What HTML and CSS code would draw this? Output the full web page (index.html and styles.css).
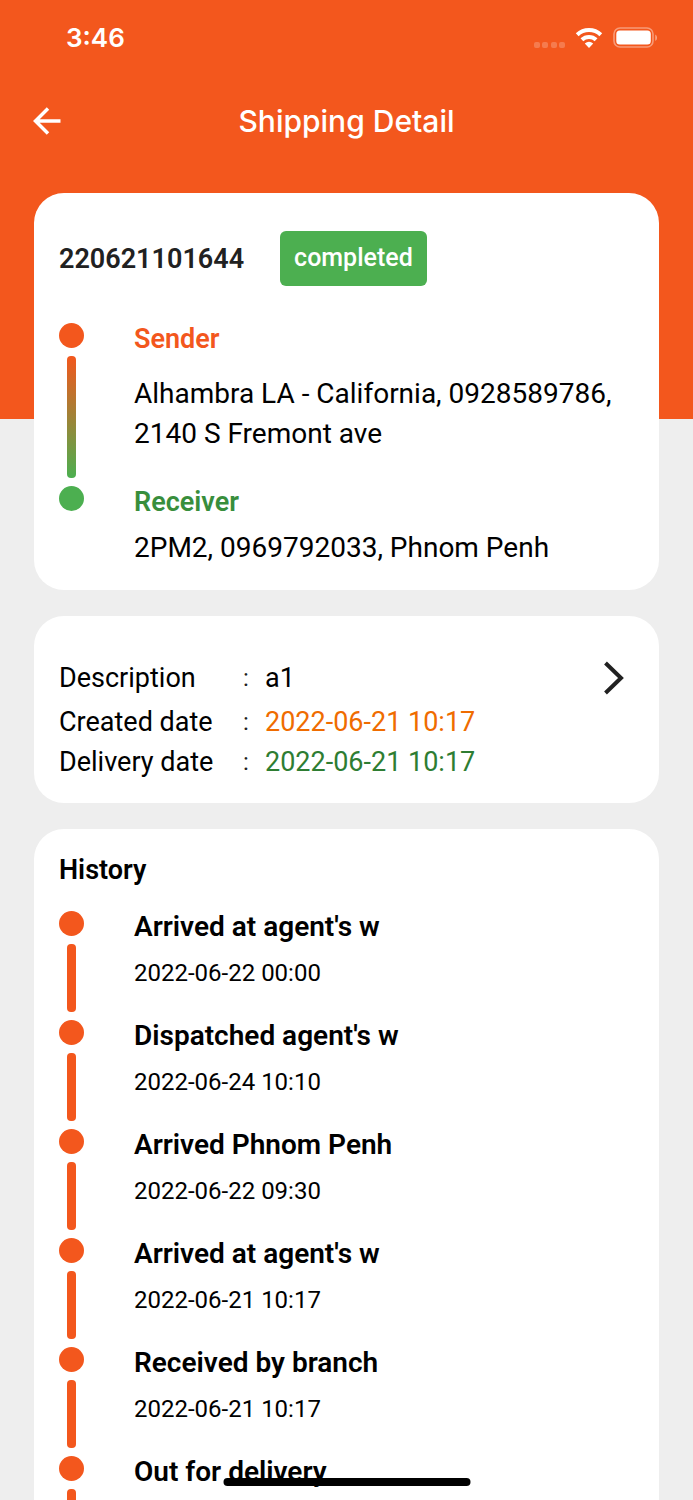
FILE: index.html
```html
<!DOCTYPE html>
<html lang="en">
<head>
<meta charset="utf-8">
<meta name="viewport" content="width=device-width, initial-scale=1">
<title>Shipping Detail</title>
<link rel="stylesheet" href="styles.css">
</head>
<body>
<div class="app">
  <div class="status-bar">
    <span class="clock">3:46</span>
    <div class="status-icons">
      <svg class="signal" width="32" height="8" viewBox="0 0 32 8" fill="#fff" fill-opacity=".22" aria-hidden="true"><rect x="1" y="1" width="6" height="6" rx="2"/><rect x="9" y="1" width="6" height="6" rx="2"/><rect x="18" y="1" width="6" height="6" rx="2"/><rect x="26" y="1" width="6" height="6" rx="2"/></svg>
      <svg width="28" height="20" viewBox="0 0 28 20" aria-hidden="true">
        <path d="M2.2 6.8A17 17 0 0 1 25.8 6.8" fill="none" stroke="#fff" stroke-width="4"/>
        <path d="M6.9 11.8A10.3 10.3 0 0 1 21.1 11.8" fill="none" stroke="#fff" stroke-width="4"/>
        <path d="M9.8 15.6Q14 12 18.2 15.6L14 20Z" fill="#fff"/>
      </svg>
      <svg width="45" height="22" viewBox="0 0 45 22" aria-hidden="true">
        <rect x="1" y="1" width="39" height="19" rx="6" fill="none" stroke="#fff" stroke-opacity=".4" stroke-width="1.6"/>
        <rect x="3.300" y="3.500" width="34.500" height="14" rx="3.500" fill="#fff"/>
        <path d="M42.300 7.500Q44 8.500 44 10.700T42.300 14Z" fill="#fff" fill-opacity=".5"/>
      </svg>
    </div>
  </div>

  <header class="toolbar">
    <button class="icon-button" type="button" aria-label="Back">
      <svg width="28" height="28" viewBox="0 0 28 28" fill="none" stroke="#fff" stroke-width="3.500" aria-hidden="true"><path d="M27.500 14H3M15 1.500L2.500 14L15 26.500"/></svg>
    </button>
    <h1 class="toolbar-title">Shipping Detail</h1>
  </header>

  <main class="cards">
    <section class="card route">
      <div class="route-head">
        <span class="tracking">220621101644</span>
        <span class="badge">completed</span>
      </div>
      <div class="step">
        <div class="rail"><span class="dot"></span><span class="bar bar-fade"></span></div>
        <div class="stop stop-from">
          <h2 class="stop-title sender">Sender</h2>
          <p class="address">Alhambra LA - California, 0928589786, 2140 S Fremont ave</p>
        </div>
      </div>
      <div class="step">
        <div class="rail"><span class="dot dot-green"></span></div>
        <div class="stop stop-to">
          <h2 class="stop-title receiver">Receiver</h2>
          <p class="address">2PM2, 0969792033, Phnom Penh</p>
        </div>
      </div>
    </section>

    <section class="card info">
      <dl class="facts">
        <div class="fact fact-main"><dt>Description</dt><dd class="value">a1</dd>
          <dd class="more"><button class="icon-button" type="button" aria-label="More details">
            <svg width="20" height="34" viewBox="0 0 20 34" fill="none" stroke="#212121" stroke-width="4" aria-hidden="true"><path d="M1.500 2L17 17L1.500 32"/></svg>
          </button></dd>
        </div>
        <div class="fact"><dt>Created date</dt><dd class="value created">2022-06-21 10:17</dd></div>
        <div class="fact"><dt>Delivery date</dt><dd class="value delivered">2022-06-21 10:17</dd></div>
      </dl>
    </section>

    <section class="card history">
      <h2 class="history-title">History</h2>
      <ol class="events">
        <li class="step"><div class="rail"><span class="dot"></span><span class="bar"></span></div><div class="event"><h3 class="event-title">Arrived at agent's w</h3><time class="event-time">2022-06-22 00:00</time></div></li>
        <li class="step"><div class="rail"><span class="dot"></span><span class="bar"></span></div><div class="event"><h3 class="event-title">Dispatched agent's w</h3><time class="event-time">2022-06-24 10:10</time></div></li>
        <li class="step"><div class="rail"><span class="dot"></span><span class="bar"></span></div><div class="event"><h3 class="event-title">Arrived Phnom Penh</h3><time class="event-time">2022-06-22 09:30</time></div></li>
        <li class="step"><div class="rail"><span class="dot"></span><span class="bar"></span></div><div class="event"><h3 class="event-title">Arrived at agent's w</h3><time class="event-time">2022-06-21 10:17</time></div></li>
        <li class="step"><div class="rail"><span class="dot"></span><span class="bar"></span></div><div class="event"><h3 class="event-title">Received by branch</h3><time class="event-time">2022-06-21 10:17</time></div></li>
        <li class="step"><div class="rail"><span class="dot"></span><span class="bar"></span></div><div class="event"><h3 class="event-title">Out for delivery</h3></div></li>
      </ol>
    </section>
  </main>
  <div class="home-indicator"></div>
</div>
</body>
</html>
```
FILE: styles.css
```css
:root {
  --orange: #f3571d;
  --green: #4caf50;
}

* {
  box-sizing: border-box;
  margin: 0;
  padding: 0;
}

.app {
  height: 100vh;
  overflow: hidden;
  background: linear-gradient(var(--orange) 419px, #eee 419px);
  color: #000;
  font-family: Roboto, "Liberation Sans", sans-serif;
  font-size: 27px;
  line-height: 40px;
}

.status-bar {
  display: flex;
  align-items: center;
  justify-content: space-between;
  height: 76px;
  padding: 0 35px 0 66px;
  color: #fff;
}

.clock {
  font-family: Inter, sans-serif;
  font-size: 26px;
  font-weight: 600;
}

.status-icons {
  display: flex;
  align-items: center;
  gap: 10px;
}

.signal {
  align-self: flex-end;
}

.toolbar {
  display: grid;
  grid-template-columns: 28px 1fr 28px;
  align-items: center;
  height: 90px;
  padding: 0 33px;
  color: #fff;
}

.toolbar-title {
  font-family: Inter, sans-serif;
  font-size: 30px;
  font-weight: 500;
  text-align: center;
}

.icon-button {
  display: flex;
  border: 0;
  background: none;
  cursor: pointer;
}

.cards {
  display: flex;
  flex-direction: column;
  gap: 26px;
  padding: 27px 34px 0;
}

.card {
  flex: none;
  border-radius: 30px;
  background: #fff;
}

.route {
  padding: 38px 25px 22px;
}

.route-head {
  display: flex;
  align-items: center;
  gap: 36px;
  margin-bottom: 37px;
}

.tracking {
  color: #212121;
  font-weight: 600;
}

.badge {
  padding: 7px 14px 8px;
  border-radius: 6px;
  background: var(--green);
  color: #fff;
  font-size: 25px;
  font-weight: 500;
}

.step {
  display: flex;
  gap: 50px;
}

.rail {
  display: flex;
  flex: none;
  flex-direction: column;
  align-items: center;
  width: 25px;
}

.dot {
  width: 25px;
  height: 25px;
  border-radius: 50%;
  background: var(--orange);
}

.dot-green {
  background: var(--green);
}

.bar {
  flex: 1;
  width: 9px;
  margin: 8px 0;
  border-radius: 4px;
  background: var(--orange);
}

.bar-fade {
  background: linear-gradient(var(--orange), var(--green));
}

.stop {
  display: flex;
  flex-direction: column;
}

.stop-from {
  gap: 19px;
  padding-bottom: 32px;
}

.stop-to {
  gap: 10px;
}

.stop-title,
.history-title {
  font-size: 27px;
  font-weight: 600;
  line-height: 32px;
}

.address {
  font-size: 28px;
}

.sender {
  color: var(--orange);
}

.receiver {
  color: #388e3c;
}

.info {
  padding: 38px 25px 21px;
}

.fact {
  display: grid;
  grid-template-columns: 184px 1fr auto;
  align-items: center;
}

.fact-main {
  height: 48px;
  padding-right: 10px;
}

.value {
  display: flex;
}

.value::before {
  content: ":";
  width: 22px;
  color: #212121;
  font-size: 24px;
}

.created {
  color: #ef6c00;
}

.delivered {
  color: #2e7d32;
}

.history {
  padding: 25px 25px 0;
}

.history-title {
  margin-bottom: 25px;
}

.events {
  list-style: none;
}

.event {
  display: flex;
  flex-direction: column;
  gap: 14px;
  min-height: 109px;
  line-height: 32px;
}

.event-title {
  font-size: 28px;
  font-weight: 600;
}

.event-time {
  font-size: 24px;
}

.home-indicator {
  position: fixed;
  bottom: 14px;
  left: 50%;
  width: 247px;
  height: 8px;
  border-radius: 4px;
  background: #000;
  transform: translateX(-50%);
}
```
